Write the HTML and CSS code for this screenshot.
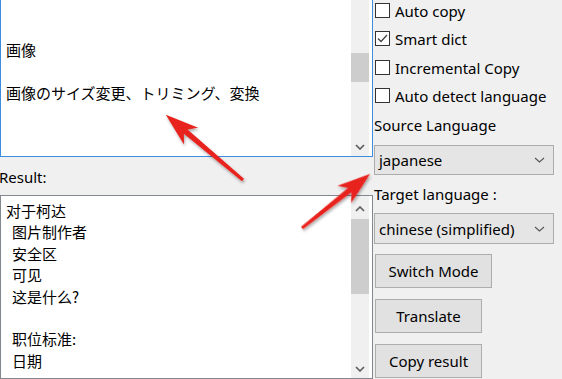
FILE: index.html
```html
<!DOCTYPE html>
<html lang="en">
<head>
  <meta charset="UTF-8" />
  <title>Translator</title>
  <link rel="stylesheet" href="styles.css">
</head>
<body>
  <div class="app">
    <div class="left">
      <div class="textbox source">
        <div class="text" lang="ja">
          <div class="line">画像</div>
          <div class="line"></div>
          <div class="line">画像のサイズ変更、トリミング、変換</div>
        </div>
        <div class="scrollbar">
          <div class="track"><div class="thumb"></div></div>
          <div class="arrow-cell">
            <svg width="10" height="6" viewBox="0 0 10 6"><polyline points="1,1 5,5 9,1" /></svg>
          </div>
        </div>
      </div>

      <div class="result-label">Result:</div>

      <div class="textbox result">
        <div class="text" lang="zh-CN">
          <div class="line">对于柯达</div>
          <div class="line indent">图片制作者</div>
          <div class="line indent">安全区</div>
          <div class="line indent">可见</div>
          <div class="line indent">这是什么?</div>
          <div class="line"></div>
          <div class="line indent">职位标准:</div>
          <div class="line indent">日期</div>
        </div>
        <div class="scrollbar">
          <div class="arrow-cell up">
            <svg width="10" height="6" viewBox="0 0 10 6"><polyline points="1,5 5,1 9,5" /></svg>
          </div>
          <div class="track"><div class="thumb"></div></div>
          <div class="arrow-cell">
            <svg width="10" height="6" viewBox="0 0 10 6"><polyline points="1,1 5,5 9,1" /></svg>
          </div>
        </div>
      </div>
    </div>

    <div class="panel">
      <div class="check"><span class="box"></span>Auto copy</div>
      <div class="check"><span class="box"><svg width="13" height="13" viewBox="0 0 13 13"><polyline points="2,6.5 5,9.5 11,3" /></svg></span>Smart dict</div>
      <div class="check"><span class="box"></span>Incremental Copy</div>
      <div class="check"><span class="box"></span>Auto detect language</div>
      <div class="label">Source Language</div>
      <div class="combo source-lang">
        <span>japanese</span>
        <svg width="11" height="6" viewBox="0 0 11 6"><polyline points="1,1 5.5,5 10,1" /></svg>
      </div>
      <div class="label target-label">Target language :</div>
      <div class="combo target-lang">
        <span>chinese (simplified)</span>
        <svg width="11" height="6" viewBox="0 0 11 6"><polyline points="1,1 5.5,5 10,1" /></svg>
      </div>
      <button class="btn switch">Switch Mode</button>
      <button class="btn">Translate</button>
      <button class="btn">Copy result</button>
    </div>

    <!-- red annotation arrows drawn over the window -->
    <svg class="arrows" width="562" height="379" viewBox="0 0 562 379">
      <defs>
        <filter id="shadow" x="-20%" y="-20%" width="140%" height="140%">
          <feDropShadow dx="1" dy="2" stdDeviation="1.5" flood-color="#000" flood-opacity="0.35" />
        </filter>
      </defs>
      <g filter="url(#shadow)" fill="#e8201b">
        <polygon transform="translate(243 180) rotate(-139.83)" points="0,-1.5 75,-2.8 68,-11 101,0 68,11 75,2.8 0,1.5" />
        <polygon transform="translate(302 228) rotate(-38.45)" points="0,-1.5 61,-2.8 54,-11 87,0 54,11 61,2.8 0,1.5" />
      </g>
    </svg>
  </div>
</body>
</html>
```

FILE: styles.css
```css
* {
  box-sizing: border-box;
}

body {
  margin: 0;
  background: #f0f0f0;
  font-family: "Noto Sans", "Noto Sans CJK SC", sans-serif;
  font-size: 15px;
  color: #000;
  overflow: hidden;
}

.app {
  position: relative;
  display: flex;
  width: 562px;
  height: 379px;
  overflow: hidden;
}

.left {
  width: 373px;
  flex-shrink: 0;
  display: flex;
  flex-direction: column;
}

.textbox {
  display: flex;
  background: #fff;
  border: 1px solid #828790;
}

.source {
  height: 159px;
  border-color: #3c8de0;
  border-top: none;
}

.result {
  height: 184px;
  flex-shrink: 0;
}

.text {
  flex: 1;
  padding-left: 5px;
  line-height: 21.5px;
}

.text:lang(ja) {
  font-family: "Noto Sans CJK JP", sans-serif;
}

.text:lang(zh-CN) {
  font-family: "Noto Sans CJK SC", sans-serif;
}

.source .text {
  padding-top: 39px;
}

.result .text {
  padding-top: 4px;
  line-height: 21.3px;
}

.line {
  height: 21.4px;
  white-space: nowrap;
}

.indent {
  padding-left: 6px;
}

.result-label {
  height: 38px;
  flex-shrink: 0;
  display: flex;
  align-items: center;
  margin-left: -1px;
  padding-top: 1px;
}

.scrollbar {
  width: 18px;
  margin-right: 3px;
  background: #f0f0f0;
  display: flex;
  flex-direction: column;
}

.track {
  flex: 1;
}

.thumb {
  background: #cdcdcd;
}

.source .thumb {
  margin-top: 53px;
  height: 29px;
}

.result .thumb {
  height: 75px;
}

.arrow-cell {
  height: 19px;
  display: flex;
  align-items: center;
  justify-content: center;
}

.arrow-cell.up {
  height: 23px;
  padding-top: 3px;
}

.arrow-cell svg polyline {
  fill: none;
  stroke: #606060;
  stroke-width: 1.7;
}

.panel {
  flex: 1;
  display: flex;
  flex-direction: column;
  align-items: flex-start;
  padding-left: 1px;
  margin-top: -3.5px;
}

.check,
.label {
  height: 28.5px;
  display: flex;
  align-items: center;
  white-space: nowrap;
}

.check {
  margin-left: 1px;
}

.box {
  width: 15px;
  height: 15px;
  margin-right: 5px;
  margin-top: -1px;
  border: 1px solid #333;
  background: #fff;
  display: flex;
  align-items: center;
  justify-content: center;
}

.box polyline {
  fill: none;
  stroke: #444;
  stroke-width: 1.3;
}

.target-label {
  height: 38px;
}

.combo {
  width: 180px;
  display: flex;
  align-items: center;
  justify-content: space-between;
  padding: 0 8px 0 4px;
  background: #e5e5e5;
  border: 1px solid #acacac;
}

.combo polyline {
  fill: none;
  stroke: #555;
  stroke-width: 1.1;
}

.source-lang {
  height: 30px;
  margin-top: 6px;
}

.target-lang {
  height: 31px;
}

.btn {
  width: 107px;
  height: 34px;
  margin-top: 11px;
  margin-left: 1px;
  padding: 0;
  font-family: inherit;
  font-size: 15px;
  color: #000;
  background: #e1e1e1;
  border: 1px solid #adadad;
}

.btn.switch {
  width: 117px;
  margin-top: 10px;
}

.arrows {
  position: absolute;
  top: 0;
  left: 0;
  pointer-events: none;
}
```
